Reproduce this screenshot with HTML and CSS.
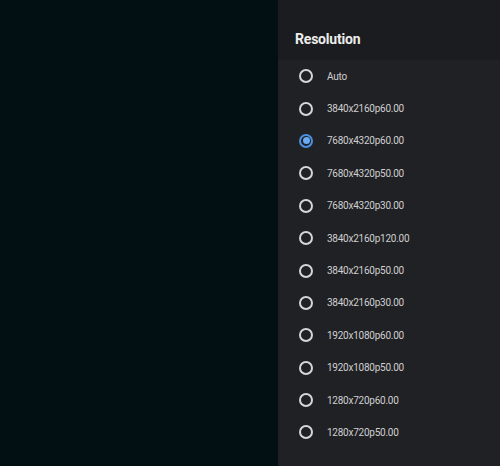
FILE: index.html
```html
<!DOCTYPE html>
<html>
<head>
<meta charset="utf-8">
<link rel="stylesheet" href="styles.css">
</head>
<body>
<div class="screen">
  <div class="backdrop"></div>
  <div class="panel">
    <div class="header"><h1 class="title">Resolution</h1></div>
    <ul class="list">
      <li class="item"><span class="radio"></span><span class="label">Auto</span></li>
      <li class="item"><span class="radio"></span><span class="label">3840x2160p60.00</span></li>
      <li class="item"><span class="radio checked"></span><span class="label">7680x4320p60.00</span></li>
      <li class="item"><span class="radio"></span><span class="label">7680x4320p50.00</span></li>
      <li class="item"><span class="radio"></span><span class="label">7680x4320p30.00</span></li>
      <li class="item"><span class="radio"></span><span class="label">3840x2160p120.00</span></li>
      <li class="item"><span class="radio"></span><span class="label">3840x2160p50.00</span></li>
      <li class="item"><span class="radio"></span><span class="label">3840x2160p30.00</span></li>
      <li class="item"><span class="radio"></span><span class="label">1920x1080p60.00</span></li>
      <li class="item"><span class="radio"></span><span class="label">1920x1080p50.00</span></li>
      <li class="item"><span class="radio"></span><span class="label">1280x720p60.00</span></li>
      <li class="item"><span class="radio"></span><span class="label">1280x720p50.00</span></li>
    </ul>
  </div>
</div>
</body>
</html>
```
FILE: styles.css
```css
html, body {
  margin: 0;
  padding: 0;
  width: 500px;
  height: 466px;
  overflow: hidden;
  background: #021014;
  font-family: Roboto, "Liberation Sans", sans-serif;
}
.screen {
  display: flex;
  width: 500px;
  height: 466px;
}
.backdrop {
  width: 278px;
  background: #021014;
}
.panel {
  width: 222px;
  background: #202125;
  display: flex;
  flex-direction: column;
}
.header {
  height: 60px;
  background: #1b1c1f;
  display: flex;
  align-items: center;
  padding-left: 17px;
  padding-top: 18px;
  box-sizing: border-box;
}
.title {
  margin: 0;
  font-size: 14px;
  font-weight: 700;
  color: #ececec;
  letter-spacing: -0.2px;
}
.list {
  list-style: none;
  margin: 0;
  padding: 0;
}
.item {
  height: 32.4px;
  display: flex;
  align-items: center;
  padding-left: 21px;
}
.radio {
  width: 10px;
  height: 10px;
  border: 2px solid #d6d6d6;
  border-radius: 50%;
  flex: none;
  position: relative;
}
.radio.checked {
  border-color: #4a90e2;
}
.radio.checked::after {
  content: "";
  position: absolute;
  left: 1.5px;
  top: 1.5px;
  width: 7px;
  height: 7px;
  border-radius: 50%;
  background: #6aaaf0;
}
.label {
  margin-left: 14px;
  font-size: 10px;
  letter-spacing: -0.25px;
  color: #cfcfcf;
}
```
